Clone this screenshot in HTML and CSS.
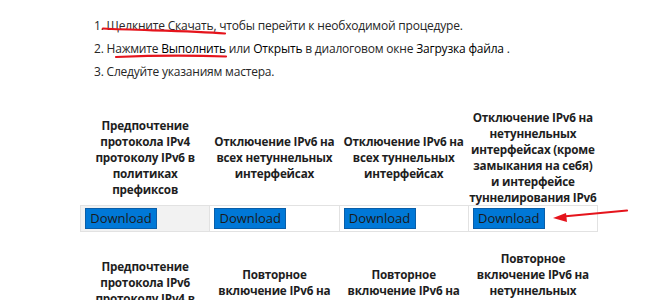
FILE: index.html
```html
<!DOCTYPE html>
<html lang="ru">
<head>
    <meta charset="UTF-8">
    <meta name="viewport" content="width=device-width, initial-scale=1.0">
    <title>Скачать</title>
    <link rel="stylesheet" href="styles.css">
</head>
<body>
    <div class="page">
        <div class="steps">
            <p>1. Щелкните Скачать, чтобы перейти к необходимой процедуре.</p>
            <p>2. Нажмите <span class="ui">Выполнить</span> или <span class="ui">Открыть</span> в диалоговом окне <span class="ui">Загрузка файла</span> .</p>
            <p>3. Следуйте указаниям мастера.</p>
        </div>
        <table class="dl-table">
            <tr class="head">
                <th>Предпочтение<br>протокола IPv4<br>протоколу IPv6 в<br>политиках<br>префиксов</th>
                <th>Отключение IPv6 на<br>всех нетуннельных<br>интерфейсах</th>
                <th>Отключение IPv6 на<br>всех туннельных<br>интерфейсах</th>
                <th>Отключение IPv6 на<br>нетуннельных<br>интерфейсах (кроме<br>замыкания на себя)<br>и интерфейсе<br>туннелирования IPv6</th>
            </tr>
            <tr class="buttons">
                <td class="active"><button class="btn">Download</button></td>
                <td><button class="btn">Download</button></td>
                <td><button class="btn">Download</button></td>
                <td><button class="btn">Download</button></td>
            </tr>
        </table>
        <table class="dl-table">
            <tr class="head">
                <th>Предпочтение<br>протокола IPv6<br>протоколу IPv4 в<br>политиках<br>префиксов</th>
                <th>Повторное<br>включение IPv6 на<br>всех нетуннельных<br>интерфейсах</th>
                <th>Повторное<br>включение IPv6 на<br>всех туннельных<br>интерфейсах</th>
                <th>Повторное<br>включение IPv6 на<br>нетуннельных<br>интерфейсах и<br>интерфейсе<br>туннелирования IPv6</th>
            </tr>
            <tr class="buttons">
                <td><button class="btn">Download</button></td>
                <td><button class="btn">Download</button></td>
                <td><button class="btn">Download</button></td>
                <td><button class="btn">Download</button></td>
            </tr>
        </table>
    </div>
    <!-- red marks drawn over the screenshot -->
    <svg class="marks" width="660" height="300" viewBox="0 0 660 300">
        <path d="M103 28.5 C 140 30.5, 190 30.5, 225 33.5" />
        <path d="M116 57 C 150 55.5, 200 55.5, 226 56.5" />
        <path d="M627 210.5 L 563 216.5" />
        <polygon points="553,218 566,213 567,222" />
    </svg>
</body>
</html>
```

FILE: styles.css
```css
body {
    margin: 0;
    font-family: 'Open Sans', 'Noto Sans', sans-serif;
    color: #262626;
    background: #fff;
    overflow: hidden;
    position: relative;
}
.page {
    padding: 14px 0 0 80px;
}
.steps {
    padding-left: 14px;
}
.steps p {
    margin: 0;
    font-size: 12px;
    letter-spacing: -0.2px;
    line-height: 23px;
}
.steps .ui {
    color: #000;
}
.dl-table {
    border-collapse: collapse;
    width: 518px;
    table-layout: fixed;
    margin-top: 26px;
}
.dl-table + .dl-table {
    margin-top: 18px;
}
.head th {
    font-size: 11.7px;
    font-weight: 700;
    letter-spacing: -0.2px;
    line-height: 16px;
    color: #1e1e1e;
    text-align: center;
    vertical-align: middle;
    white-space: nowrap;
    padding: 0;
}
.buttons td {
    border: 1px solid #e2e2e2;
    padding: 2px 4px 2px;
    background: #fff;
}
.buttons td.active {
    background: #f2f2f2;
}
.btn {
    display: block;
    width: 72px;
    height: 21px;
    padding: 0;
    background: #0078d7;
    border: 1px solid #0a5ea8;
    color: #1a1a1a;
    font-family: 'Open Sans', 'Noto Sans', sans-serif;
    font-size: 13px;
    line-height: 19px;
}
.marks {
    position: absolute;
    top: 0;
    left: 0;
    pointer-events: none;
}
.marks path {
    fill: none;
    stroke: #e5141c;
    stroke-width: 2.2;
    stroke-linecap: round;
}
.marks polygon {
    fill: #e5141c;
}
```
